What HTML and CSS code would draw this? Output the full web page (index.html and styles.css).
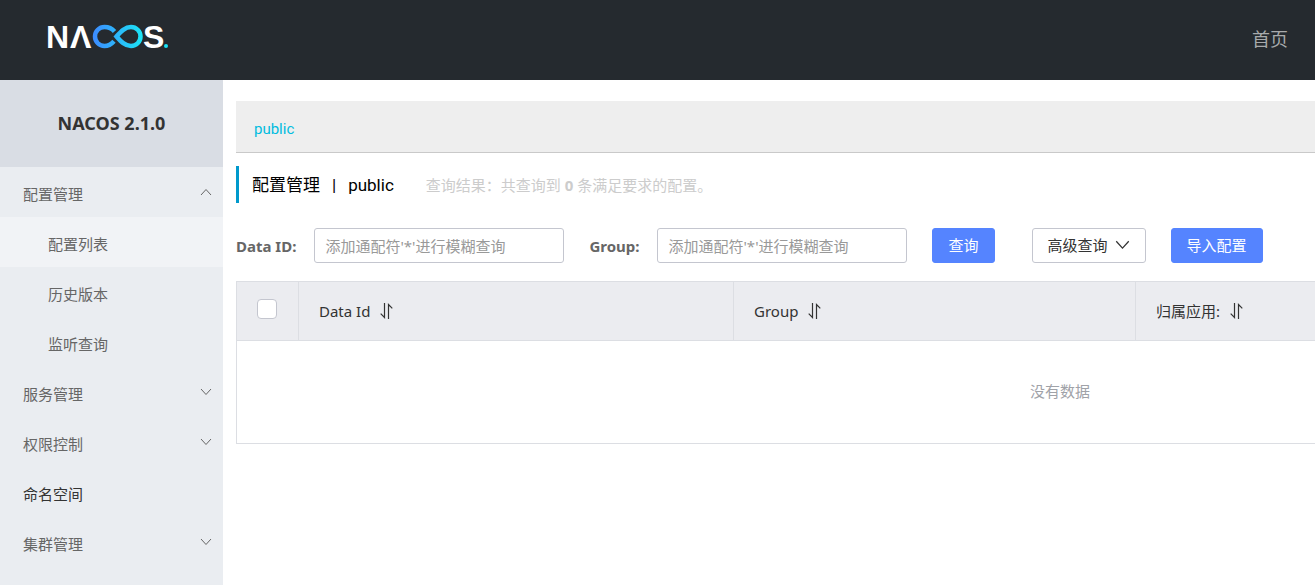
FILE: index.html
```html
<!DOCTYPE html>
<html lang="zh-CN">
<head>
<meta charset="utf-8">
<title>Nacos</title>
<meta name="viewport" content="width=device-width, initial-scale=1">
<link rel="stylesheet" href="styles.css">
</head>
<body>
<svg class="defs" width="0" height="0" aria-hidden="true">
  <symbol id="chevron-down" viewBox="0 0 12 8"><path d="M1 1l5 5.5L11 1" fill="none" stroke="currentColor"/></symbol>
  <symbol id="chevron-up" viewBox="0 0 12 8"><path d="M1 7l5-5.5L11 7" fill="none" stroke="currentColor"/></symbol>
  <symbol id="sort" viewBox="0 0 13 16"><path d="M4.5 0v14.5L.7 10.7M8.5 16V1.500l3.800 3.800" fill="none" stroke="currentColor" stroke-width="1.200"/></symbol>
</svg>
<header class="topbar">
  <a class="logo" href="#" aria-label="NACOS">
    <svg width="126" height="44" viewBox="-4 -8 126 44" aria-hidden="true">
      <defs>
        <linearGradient id="loop" gradientUnits="userSpaceOnUse" x1="45" y1="0" x2="94" y2="0">
          <stop offset="0" stop-color="#3d8bff"/><stop offset="1" stop-color="#1be3f5"/>
        </linearGradient>
      </defs>
      <text class="logo-text" x="-2" y="23">N</text>
      <text class="logo-text" x="22" y="23">Λ</text>
      <path d="M66.500 6.500C64 3.500 60.500 2 56.500 2a9.500 9.500 0 1 0 0 19c4 0 7-2 9.500-4.800" fill="none" stroke="url(#loop)" stroke-width="4.500"/>
      <path d="M68.500 11.500C73 6.500 77 2 83 2a9.500 9.500 0 1 1 0 19c-6 0-10-4.500-14.500-9.500z" fill="none" stroke="url(#loop)" stroke-width="4.500"/>
      <text class="logo-text" x="95" y="23">S</text>
      <circle cx="118" cy="21" r="2" fill="#1be3f5"/>
    </svg>
  </a>
  <nav><a class="home" href="#">首页</a></nav>
</header>
<div class="layout">
  <aside class="sidebar">
    <h1 class="version">NACOS 2.1.0</h1>
    <nav class="menu">
      <button class="item" type="button" aria-expanded="true">配置管理<svg class="arrow"><use href="#chevron-up"/></svg></button>
      <a class="item sub active" href="#">配置列表</a>
      <a class="item sub" href="#">历史版本</a>
      <a class="item sub" href="#">监听查询</a>
      <button class="item" type="button" aria-expanded="false">服务管理<svg class="arrow"><use href="#chevron-down"/></svg></button>
      <button class="item" type="button" aria-expanded="false">权限控制<svg class="arrow"><use href="#chevron-down"/></svg></button>
      <a class="item dark" href="#">命名空间</a>
      <button class="item" type="button" aria-expanded="false">集群管理<svg class="arrow"><use href="#chevron-down"/></svg></button>
    </nav>
  </aside>
  <main class="content">
    <div class="namespaces"><a href="#">public</a></div>
    <div class="heading">
      <h2>配置管理<span class="bar">|</span>public</h2>
      <p>查询结果：共查询到 <strong>0</strong> 条满足要求的配置。</p>
    </div>
    <form class="search">
      <div class="field">
        <label for="data-id">Data ID:</label>
        <input id="data-id" type="text" placeholder="添加通配符'*'进行模糊查询">
      </div>
      <div class="field">
        <label for="group">Group:</label>
        <input id="group" type="text" placeholder="添加通配符'*'进行模糊查询">
      </div>
      <button class="btn primary query" type="button">查询</button>
      <button class="btn" type="button">高级查询<svg class="caret"><use href="#chevron-down"/></svg></button>
      <button class="btn primary" type="button">导入配置</button>
    </form>
    <div class="table-wrap">
      <table>
        <colgroup><col class="c-check"><col class="c-id"><col class="c-group"><col></colgroup>
        <thead>
          <tr>
            <th class="check"><input type="checkbox" aria-label="全选"></th>
            <th><span class="th">Data Id<svg class="sort"><use href="#sort"/></svg></span></th>
            <th><span class="th">Group<svg class="sort"><use href="#sort"/></svg></span></th>
            <th><span class="th">归属应用:<svg class="sort"><use href="#sort"/></svg></span></th>
          </tr>
        </thead>
        <tbody><tr><td class="empty" colspan="4">没有数据</td></tr></tbody>
      </table>
    </div>
  </main>
</div>
</body>
</html>
```
FILE: styles.css
```css
* { box-sizing: border-box; }
body {
  margin: 0;
  min-height: 100vh;
  display: flex;
  flex-direction: column;
  overflow: hidden;
  background: #fff;
  color: #333;
  font: 15px/20px "Noto Sans", "Noto Sans CJK SC", sans-serif;
}
a { color: inherit; text-decoration: none; }
h1, h2, p { margin: 0; font-weight: 400; }
button, input { font: inherit; color: inherit; }
button { cursor: pointer; }
.defs { position: absolute; }

.topbar {
  display: flex;
  align-items: center;
  justify-content: space-between;
  height: 80px;
  padding: 0 27px 2px 44px;
  background: #252a2f;
}
.logo svg { display: block; }
.logo-text { font: bold 32px "Liberation Sans", Arial, sans-serif; fill: #fff; }
.home { font-size: 18px; line-height: 24px; color: #a8aaac; }

.layout { flex: 1; display: flex; }
.sidebar { flex: 0 0 223px; background: #eaedf1; }
.version {
  height: 87px;
  background: #d9dde4;
  font-size: 18px;
  font-weight: 700;
  line-height: 87px;
  text-align: center;
}
.menu { display: flex; flex-direction: column; }
.item {
  display: flex;
  align-items: center;
  justify-content: space-between;
  height: 50px;
  padding: 4px 11px 0 23px;
  border: 0;
  background: none;
  color: #666;
  text-align: left;
}
.sub { padding-left: 48px; }
.active { background: #f1f3f6; }
.dark { color: #333; }
.arrow { width: 12px; height: 8px; margin-bottom: 4px; }

.content { flex: 1; min-width: 0; padding: 21px 0 0 13px; }
.namespaces {
  height: 52px;
  padding: 18px 18px 0;
  border-bottom: 1px solid #c9c9c9;
  background: #eee;
  color: #00bcdf;
  font-family: Roboto, "Noto Sans CJK SC", sans-serif;
}
.heading {
  display: flex;
  align-items: center;
  gap: 32px;
  height: 37px;
  margin-top: 13px;
  padding-left: 13px;
  border-left: 3px solid #09c;
}
.heading h2 {
  font-family: Roboto, "Noto Sans CJK SC", sans-serif;
  font-size: 17px;
  line-height: 24px;
  color: #000;
}
.bar { margin: 0 12px; }
.heading p { color: #ccc; }

.search { display: flex; align-items: center; gap: 25px; margin: 25px 0 18px; white-space: nowrap; }
.field { display: flex; align-items: center; gap: 18px; }
.field label { font-weight: 700; color: #666; }
.field input {
  width: 250px;
  height: 35px;
  padding: 0 10px;
  border: 1px solid #c4c6cf;
  border-radius: 3px;
}
.field input::placeholder { color: #999; }
.btn {
  display: flex;
  align-items: center;
  gap: 7px;
  height: 35px;
  padding: 0 15px 2px;
  border: 1px solid #c4c6cf;
  border-radius: 3px;
  background: #fff;
}
.primary { border-color: #5584ff; background: #5584ff; color: #fff; }
.query { margin-right: 12px; }
.caret { width: 15px; height: 10px; }

.table-wrap { overflow: hidden; }
table {
  width: 100%;
  min-width: 1648px;
  border: 1px solid #dcdee3;
  border-collapse: separate;
  border-spacing: 0;
  table-layout: fixed;
}
.c-check { width: 62px; }
.c-id { width: 435px; }
.c-group { width: 402px; }
th {
  height: 59px;
  padding: 0 20px;
  border-right: 1px solid #dcdee3;
  border-bottom: 1px solid #dcdee3;
  background: #ebecf0;
  font-weight: 400;
  text-align: left;
}
.th { display: flex; align-items: center; gap: 10px; }
.sort { width: 13px; height: 16px; }
.check input {
  appearance: none;
  display: block;
  width: 20px;
  height: 20px;
  margin: 0 0 4px;
  border: 1px solid #c4c6cf;
  border-radius: 4px;
  background: #fff;
}
.empty { height: 102px; padding: 0 0 2px; color: #a0a2a8; text-align: center; }
```
